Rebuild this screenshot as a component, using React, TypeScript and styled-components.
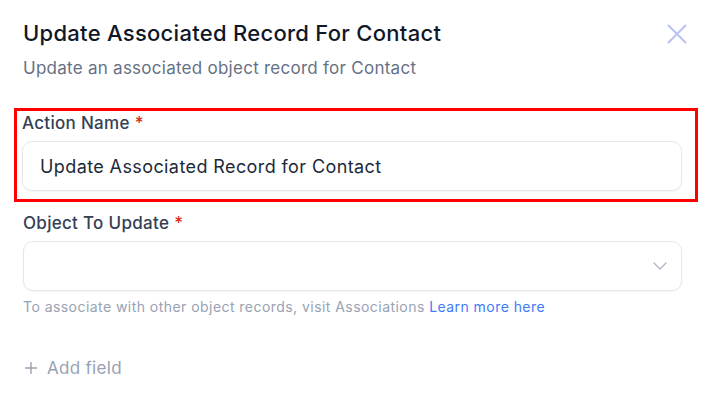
import React from "react";
import styled, { createGlobalStyle } from "styled-components";

const Global = createGlobalStyle`
  html, body { margin: 0; padding: 0; background: #ffffff; }
  body { font-family: Inter, "Noto Sans", sans-serif; -webkit-font-smoothing: antialiased; }
  * { box-sizing: border-box; }
`;

const Panel = styled.div`
  width: 709px;
  height: 406px;
  padding: 19px 27px 0 23px;
  background: #fff;
  display: flex;
  flex-direction: column;
`;

const Header = styled.div`
  display: flex;
  align-items: flex-start;
  justify-content: space-between;
`;

const TitleBlock = styled.div`
  display: flex;
  flex-direction: column;
  gap: 9px;
`;

const Title = styled.h1`
  margin: 0;
  font-size: 22px;
  line-height: 28px;
  font-weight: 500;
  color: #101828;
  letter-spacing: 0.28px;
`;

const Subtitle = styled.p`
  margin: 0;
  font-size: 17px;
  line-height: 24px;
  font-weight: 400;
  color: #667085;
  letter-spacing: 0.26px;
`;

const CloseButton = styled.button`
  border: 0;
  background: transparent;
  padding: 0;
  margin: 3px -7px 0 0;
  width: 24px;
  height: 24px;
  display: flex;
  align-items: center;
  justify-content: center;
  cursor: pointer;
`;

const Highlight = styled.div`
  margin: 28px -16px 0 -9px;
  border: 3px solid #ff0000;
  padding: 0 13px 8px 5px;
`;

const Field = styled.div`
  display: flex;
  flex-direction: column;
  gap: 6px;
`;

const PlainField = styled(Field)`
  margin-top: 9px;
`;

const Label = styled.label`
  font-size: 17px;
  line-height: 24px;
  font-weight: 500;
  color: #344054;
  letter-spacing: 0.3px;
`;

const Required = styled.span`
  color: #d92d20;
  margin-left: 5px;
`;

const TextBox = styled.div`
  height: 50px;
  border: 1px solid #e4e7ec;
  border-radius: 10px;
  box-shadow: 0 1px 2px rgba(16, 24, 40, 0.05);
  display: flex;
  align-items: center;
  justify-content: space-between;
  padding: 0 14px 0 17px;
  font-size: 18px;
  letter-spacing: 0.4px;
  color: #1d2939;
`;

const Helper = styled.p`
  margin: 0;
  font-size: 14px;
  line-height: 20px;
  color: #98a2b3;
  letter-spacing: 0.45px;
`;

const Link = styled.a`
  color: #3e7bfa;
  text-decoration: none;
`;

const AddField = styled.button`
  margin-top: 39px;
  margin-left: 2px;
  align-self: flex-start;
  border: 0;
  background: transparent;
  padding: 0;
  display: flex;
  align-items: center;
  gap: 10px;
  font-family: inherit;
  font-size: 17px;
  line-height: 24px;
  letter-spacing: 0.3px;
  color: #98a2b3;
`;

export default function App() {
  return (
    <>
      <Global />
      <Panel>
        <Header>
          <TitleBlock>
            <Title>Update Associated Record For Contact</Title>
            <Subtitle>Update an associated object record for Contact</Subtitle>
          </TitleBlock>
          <CloseButton aria-label="Close">
            <svg width="20" height="20" viewBox="0 0 20 20" fill="none">
              <path d="M1.5 1.5L18.5 18.5M18.5 1.5L1.5 18.5" stroke="#b9c2f7" strokeWidth="2" strokeLinecap="round" />
            </svg>
          </CloseButton>
        </Header>

        <Highlight>
          <Field>
            <Label>
              Action Name<Required>*</Required>
            </Label>
            <TextBox>Update Associated Record for Contact</TextBox>
          </Field>
        </Highlight>

        <PlainField>
          <Label>
            Object To Update<Required>*</Required>
          </Label>
          <TextBox>
            <span />
            <svg width="14" height="8" viewBox="0 0 14 8" fill="none">
              <path d="M1 1L7 7L13 1" stroke="#a8b0bd" strokeWidth="1.1" strokeLinecap="round" strokeLinejoin="round" />
            </svg>
          </TextBox>
          <Helper>
            To associate with other object records, visit Associations <Link href="#">Learn more here</Link>
          </Helper>
        </PlainField>

        <AddField>
          <svg width="12" height="12" viewBox="0 0 12 12" fill="none">
            <path d="M6 0.5V11.5M0.5 6H11.5" stroke="#98a2b3" strokeWidth="1.4" strokeLinecap="round" />
          </svg>
          Add field
        </AddField>
      </Panel>
    </>
  );
}
